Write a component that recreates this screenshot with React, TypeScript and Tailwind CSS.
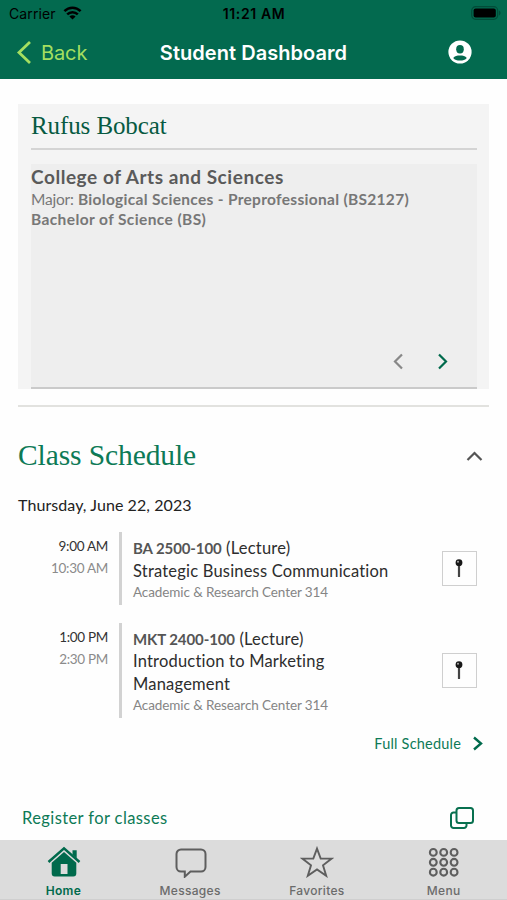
import type { ReactNode } from 'react'

interface ClassItem {
  start: string
  end: string
  code: string
  title: string
  room: string
}

const CLASSES: ClassItem[] = [
  {
    start: '9:00 AM',
    end: '10:30 AM',
    code: 'BA 2500-100',
    title: 'Strategic Business Communication',
    room: 'Academic & Research Center 314',
  },
  {
    start: '1:00 PM',
    end: '2:30 PM',
    code: 'MKT 2400-100',
    title: 'Introduction to Marketing Management',
    room: 'Academic & Research Center 314',
  },
]

function Chevron({ points, className, width = 2.2 }: { points: string; className: string; width?: number }) {
  return (
    <svg className={className} fill="none" stroke="currentColor" strokeWidth={width}>
      <polyline points={points} />
    </svg>
  )
}

function WifiIcon() {
  return (
    <svg className="w-[19px] h-[14px] mt-[-1px]" viewBox="0 0 19 14" fill="none" stroke="#000" strokeWidth="2.5">
      <path d="M1.4 5.2C6 .6 13 .6 17.6 5.2" />
      <path d="M4.2 8.4c3-3 7.6-3 10.6 0" />
      <path d="M9.5 13.5 6.4 10.4c1.8-1.6 4.4-1.6 6.2 0Z" fill="#000" stroke="none" />
    </svg>
  )
}

function BatteryIcon() {
  return (
    <svg className="w-[30px] h-[14px] mt-[-1px]" viewBox="0 0 30 14">
      <rect x=".7" y=".7" width="26" height="12.6" rx="4" fill="none" stroke="#024c39" strokeWidth="1.2" />
      <rect x="2.6" y="2.5" width="22.2" height="9" rx="2" fill="#000" />
      <path d="M28 4.6c2 .8 2 4 0 4.8Z" fill="#024c39" />
    </svg>
  )
}

function ProfileIcon() {
  return (
    <svg className="w-[24px] h-[24px] mt-[-1px]" viewBox="0 0 24 24">
      <circle cx="12" cy="12" r="11.6" fill="#fff" />
      <ellipse cx="12" cy="9.2" rx="3.8" ry="4.2" fill="#036a4f" />
      <path d="M5.2 17.9c1.3-1.9 4-2.5 6.8-2.5s5.5.6 6.8 2.5c-1.3 1.7-4 2.7-6.8 2.7s-5.500-1-6.800-2.700Z" fill="#036a4f" />
    </svg>
  )
}

function PinIcon() {
  return (
    <svg className="mr-[1px] w-[8px] h-[19px]" viewBox="0 0 8 19">
      <rect x="2.9" y="5" width="2.2" height="13" rx=".6" fill="#444" />
      <circle cx="4" cy="3.7" r="3.4" fill="#181818" />
      <circle cx="3" cy="2.7" r="1" fill="#aaa" />
    </svg>
  )
}

function HomeIcon() {
  return (
    <svg className="ml-[2px] w-[34px] h-[32px]" viewBox="0 0 34 32">
      <path d="M1.5 16 17 2.4 32.5 16" fill="none" stroke="#006a4c" strokeWidth="2.5" />
      <path d="M25.5 4.2h4.200v8l-4.200-3.600Z" fill="#006a4c" />
      <path
        fillRule="evenodd"
        d="M17 5.9 29.3 16.7V27.5a3 3 0 0 1-3 3H7.7a3 3 0 0 1-3-3V16.7ZM13.7 18h6.800v10h-6.800Z"
        fill="#006a4c"
      />
    </svg>
  )
}

function MessageIcon() {
  return (
    <svg className="ml-[1px] w-[34px] h-[32px]" viewBox="0 0 34 32" fill="none" stroke="#5e5e5e" strokeWidth="2">
      <path d="M7 3.5h20a4.5 4.5 0 0 1 4.5 4.5v13a4.5 4.5 0 0 1-4.5 4.5H16.5L10.8 30.7V25.5H7A4.5 4.5 0 0 1 2.5 21V8A4.5 4.5 0 0 1 7 3.5Z" />
    </svg>
  )
}

function StarIcon() {
  return (
    <svg className="w-[34px] h-[32px]" viewBox="0 0 34 32" fill="none" stroke="#5e5e5e" strokeWidth="1.9">
      <path d="m17 2.6 3.7 10h11L23 19.3l3.2 10.5-9.2-6.3-9.2 6.3L11 19.3l-8.700-6.700h11Z" />
    </svg>
  )
}

function MenuIcon() {
  const steps = [0, 1, 2]
  return (
    <svg className="w-[34px] h-[32px]" viewBox="0 0 34 32" fill="none" stroke="#5e5e5e" strokeWidth="2.1">
      {steps.map((r) => steps.map((c) => <circle key={`${r}${c}`} cx={6.3 + c * 10.4} cy={6.4 + r * 9.9} r="3.4" />))}
    </svg>
  )
}

function Tab({ label, icon, active }: { label: string; icon: ReactNode; active?: boolean }) {
  return (
    <button className={`flex-1 flex flex-col items-center pt-[6px] font-['Inter'] text-[12px] leading-[14px] tracking-[0.3px] ${active ? 'font-semibold text-[#006a4c]' : 'font-medium text-[#6b6b6b]'}`}>
      {icon}
      <span className="mt-[6px]">{label}</span>
    </button>
  )
}

function ClassRow({ item }: { item: ClassItem }) {
  return (
    <div className="flex">
      <div className="w-[90px] pt-[3px] text-right text-[13.5px] leading-[22px] tracking-[-0.3px] text-[#333]">
        <div>{item.start}</div>
        <div className="text-[#8b8b8b]">{item.end}</div>
      </div>
      <div className="ml-[11px] w-[3px] bg-[#d2d2d2]" />
      <div className="ml-[11px] w-[270px] pt-[5px] pb-[1px] text-[16.5px] leading-[22.6px] tracking-[0.2px] text-[#2d2d2d]">
        <div>
          <span className="text-[15px] font-bold tracking-[-0.1px] text-[#555]">{item.code}</span> (Lecture)
        </div>
        <div>{item.title}</div>
        <div className="text-[13.5px] leading-[21.5px] tracking-[-0.1px] text-[#858585]">{item.room}</div>
      </div>
      <div className="ml-auto mr-[12px] self-center w-[35px] h-[35px] border border-[#cfcfcf] flex items-center justify-center">
        <PinIcon />
      </div>
    </div>
  )
}

export default function App() {
  return (
    <div className="w-[507px] h-[900px] overflow-hidden flex flex-col bg-[#fefefe] font-['Lato',sans-serif] [font-variant-ligatures:none]">
      <header className="h-[79px] shrink-0 bg-[#036a4f] font-['Inter',sans-serif]">
        <div className="h-[27px] grid grid-cols-3 items-center pl-[9px] pr-[6px] text-[14px] text-black">
          <div className="flex items-center gap-[7px]">
            <span className="tracking-[0.1px]">Carrier</span>
            <WifiIcon />
          </div>
          <div className="mr-[2px] text-center font-semibold tracking-[0.6px]">11:21 AM</div>
          <div className="flex justify-end">
            <BatteryIcon />
          </div>
        </div>
        <div className="h-[51px] grid grid-cols-[150px_1fr_150px] items-center">
          <button className="flex items-center pl-[16px] gap-[9px] text-[20px] tracking-[-0.1px] text-[#a4df60]">
            <Chevron points="14,2 3,12.5 14,23" className="w-[16px] h-[25px]" width={2.8} />
            Back
          </button>
          <h1 className="text-center whitespace-nowrap text-[20px] font-semibold tracking-[0.05px] text-white">Student Dashboard</h1>
          <div className="flex justify-end pr-[35px]">
            <ProfileIcon />
          </div>
        </div>
      </header>

      <main className="flex-1 overflow-hidden px-[18px]">
        {/* Student card */}
        <section className="mt-[25px] h-[285px] bg-[#f4f4f4] pl-[13px] pr-[12px] pt-[2px]">
          <h2 className="h-[44px] border-b-[2px] border-[#d4d4d4] font-['Liberation_Serif',serif] text-[25px] leading-[40px] tracking-[-0.1px] text-[#075a42]">
            Rufus Bobcat
          </h2>
          <div className="mt-[14px] h-[225px] border-b-[2px] border-[#cacaca] bg-[#eee] flex flex-col">
            <div className="text-[19px] leading-[25px] font-bold tracking-[0.55px] text-[#5a5a5a]">College of Arts and Sciences</div>
            <div className="mt-[1px] text-[15.5px] leading-[19.5px] tracking-[0.3px] text-[#777]">
              <span className="tracking-[-0.2px]">Major:</span> <b>Biological Sciences - Preprofessional (BS2127)</b>
              <br />
              <b className="tracking-[0.4px]">Bachelor of Science (BS)</b>
            </div>
            <div className="mt-auto mb-[17px] mr-[29px] flex justify-end gap-[33px]">
              <Chevron points="9,1.5 2,8.5 9,15.5" className="w-[11px] h-[17px] text-[#888]" />
              <Chevron points="2,1.5 9,8.5 2,15.5" className="w-[11px] h-[17px] text-[#006a4c]" />
            </div>
          </div>
        </section>

        <div className="mt-[16px] h-[2px] bg-[#e2e2df]" />

        {/* Class schedule */}
        <section>
          <div className="mt-[28px] h-[42px] flex items-center justify-between pr-[6px]">
            <h2 className="mt-[-1px] font-['Liberation_Serif',serif] text-[29.5px] tracking-[-0.1px] text-[#0d7a56]">Class Schedule</h2>
            <Chevron points="1.5,9 8.5,2 15.5,9" className="w-[17px] h-[11px] text-[#555]" />
          </div>
          <div className="mt-[16px] text-[16px] leading-[24px] tracking-[0.08px] text-[#222]">Thursday, June 22, 2023</div>
          <div className="mt-[15px] flex flex-col gap-[18px]">
            {CLASSES.map((c) => (
              <ClassRow key={c.code} item={c} />
            ))}
          </div>
          <a className="mt-[15px] mr-[6px] flex items-center justify-end gap-[11px] text-[14.5px] leading-[22px] tracking-[0.2px] text-[#0d7a56]">
            Full Schedule
            <Chevron points="2,1.5 9,7.5 2,13.5" className="w-[11px] h-[15px] text-[#006a4c]" width={2.4} />
          </a>
        </section>

        <div className="mt-[51px] pl-[4px] pr-[15px] flex items-center justify-between text-[16.5px] leading-[24px] tracking-[0.4px] text-[#0d7a56]">
          Register for classes
          <svg className="w-[24px] h-[22px]" viewBox="0 0 24 22" fill="none" stroke="#08704f" strokeWidth="2">
            <rect x="6.5" y="1" width="16.5" height="15" rx="2.5" />
            <path d="M6.5 5.5H3.5A2.5 2.5 0 0 0 1 8v10.5A2.5 2.5 0 0 0 3.5 21H14a2.5 2.5 0 0 0 2.5-2.500V16" />
          </svg>
        </div>
      </main>

      <nav className="h-[60px] shrink-0 flex bg-[#dcdcdc] border-b border-[#cfcfcf]">
        <Tab label="Home" icon={<HomeIcon />} active />
        <Tab label="Messages" icon={<MessageIcon />} />
        <Tab label="Favorites" icon={<StarIcon />} />
        <Tab label="Menu" icon={<MenuIcon />} />
      </nav>
    </div>
  )
}
